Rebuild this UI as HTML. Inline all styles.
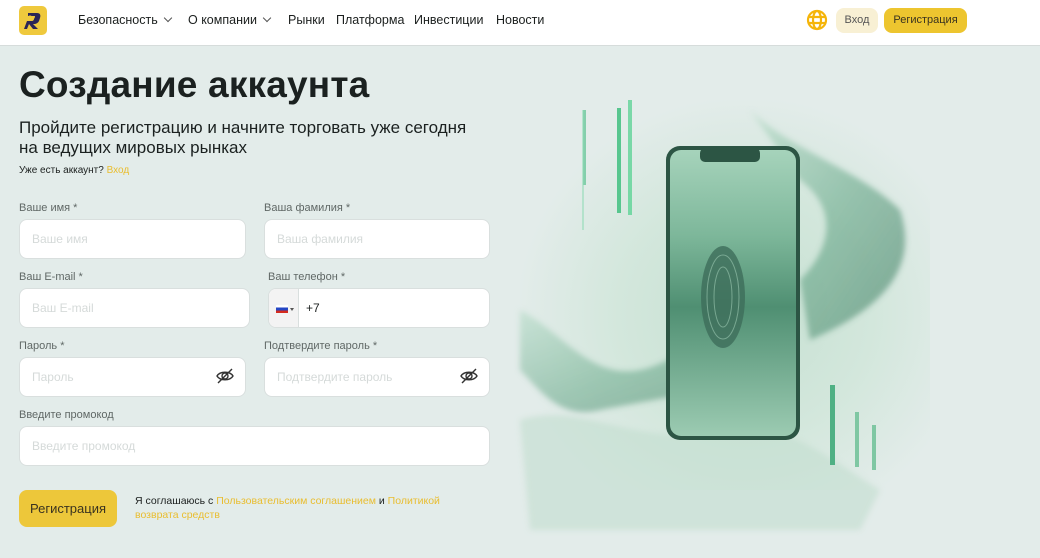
<!DOCTYPE html>
<html><head><meta charset="utf-8"><style>
*{box-sizing:border-box;margin:0;padding:0}
body{width:1040px;height:558px;overflow:hidden;background:#e3ecea;font-family:"Liberation Sans",sans-serif;position:relative;color:#1b1f1e}
.hdr{position:absolute;left:0;top:0;width:1040px;height:46px;background:#fff;border-bottom:1px solid #d6dcdb}
.logo{position:absolute;left:19px;top:6px;width:28px;height:29px;background:#efc93d;border-radius:5px}
.nav{position:absolute;top:13px;font-size:12.5px;color:#1b1f1e}
.chev{display:inline-block;width:6px;height:6px;border-right:1.2px solid #555;border-bottom:1.2px solid #555;transform:rotate(45deg);margin:0 0 3px 7px}
.abs{position:absolute}
h1{position:absolute;left:19px;top:64px;font-size:37px;font-weight:bold;color:#1b2120;letter-spacing:.2px}
.sub{position:absolute;left:19px;top:118px;font-size:17px;line-height:20px;color:#1b2120}
.lbl{position:absolute;font-size:11px;color:#606866}
.inp{position:absolute;height:40px;background:#fff;border:1px solid #d9dfde;border-radius:8px;font-size:12px;color:#d5dad9;padding:12px 12px}
.y{color:#e9bd2f}
</style></head><body>
<div class="hdr">
 <div class="logo"><svg width="28" height="29" viewBox="0 0 28 29"><path d="M9 7h9c3 0 4 2 3 5l-1 3c-1 2-3 3-5 3h-1l5 5h-5l-4-5-2 5H5l3-8h5c1 0 2-1 2-2l1-2c0-1 0-1-1-1h-6z" fill="#2b2556"/><circle cx="11" cy="12" r="2.5" fill="#efc93d"/></svg></div>
 <div class="nav" style="left:78px">Безопасность<span class="chev"></span></div>
 <div class="nav" style="left:188px">О компании<span class="chev"></span></div>
 <div class="nav" style="left:288px">Рынки</div>
 <div class="nav" style="left:336px">Платформа</div>
 <div class="nav" style="left:414px">Инвестиции</div>
 <div class="nav" style="left:496px">Новости</div>
 <svg class="abs" style="left:806px;top:9px" width="22" height="22" viewBox="0 0 22 22" fill="none" stroke="#f5b50a" stroke-width="2.2"><circle cx="11" cy="11" r="9"/><ellipse cx="11" cy="11" rx="4" ry="9"/><path d="M2 8h18M2 14h18"/></svg>
 <div class="abs" style="left:836px;top:8px;width:42px;height:25px;border-radius:8px;background:#f8f0d4;font-size:11px;color:#555;text-align:center;line-height:25px">Вход</div>
 <div class="abs" style="left:884px;top:8px;width:83px;height:25px;border-radius:8px;background:#edc52f;font-size:11px;color:#3a3320;text-align:center;line-height:25px">Регистрация</div>
</div>
<h1>Создание аккаунта</h1>
<div class="sub">Пройдите регистрацию и начните торговать уже сегодня<br>на ведущих мировых рынках</div>
<div class="abs" style="left:19px;top:165px;font-size:10px">Уже есть аккаунт? <span class="y">Вход</span></div>

<div class="lbl" style="left:19px;top:202px">Ваше имя *</div>
<div class="lbl" style="left:264px;top:202px">Ваша фамилия *</div>
<div class="inp" style="left:19px;top:219px;width:227px">Ваше имя</div>
<div class="inp" style="left:264px;top:219px;width:226px">Ваша фамилия</div>

<div class="lbl" style="left:19px;top:271px">Ваш E-mail *</div>
<div class="lbl" style="left:268px;top:271px">Ваш телефон *</div>
<div class="inp" style="left:19px;top:288px;width:231px">Ваш E-mail</div>
<div class="inp" style="left:268px;top:288px;width:222px;padding:0;overflow:hidden">
 <div class="abs" style="left:0;top:0;width:30px;height:38px;background:#f3f3f3;border-right:1px solid #d9dfde"></div>
 <div class="abs" style="left:7px;top:16px;width:12px;height:8px;background:linear-gradient(#fff 33%,#2446c4 33% 66%,#d52b1e 66%)"></div>
 <div class="abs" style="left:21px;top:19px;border:2px solid transparent;border-top:3px solid #555"></div>
 <div class="abs" style="left:37px;top:12px;color:#1b1f1e;font-size:12px">+7</div>
</div>

<div class="lbl" style="left:19px;top:340px">Пароль *</div>
<div class="lbl" style="left:264px;top:340px">Подтвердите пароль *</div>
<div class="inp" style="left:19px;top:357px;width:227px">Пароль</div>
<div class="inp" style="left:264px;top:357px;width:226px">Подтвердите пароль</div>
<svg class="abs" style="left:215px;top:366px" width="20" height="20" viewBox="0 0 20 20" fill="none" stroke="#333" stroke-width="1.4"><path d="M2 10c3-5 13-5 16 0c-3 5-13 5-16 0z"/><circle cx="10" cy="10" r="3"/><path d="M3 17L17 3"/></svg>
<svg class="abs" style="left:459px;top:366px" width="20" height="20" viewBox="0 0 20 20" fill="none" stroke="#333" stroke-width="1.4"><path d="M2 10c3-5 13-5 16 0c-3 5-13 5-16 0z"/><circle cx="10" cy="10" r="3"/><path d="M3 17L17 3"/></svg>

<div class="lbl" style="left:19px;top:409px">Введите промокод</div>
<div class="inp" style="left:19px;top:426px;width:471px">Введите промокод</div>

<div class="abs" style="left:19px;top:490px;width:98px;height:37px;border-radius:8px;background:#edc73a;font-size:13px;color:#3a3320;text-align:center;line-height:37px">Регистрация</div>
<div class="abs" style="left:135px;top:494px;font-size:10.5px;line-height:14px;width:325px">Я соглашаюсь с <span class="y">Пользовательским соглашением</span> и <span class="y">Политикой возврата средств</span></div>

<!-- illustration -->
<div class="abs" style="left:520px;top:100px;width:410px;height:390px;background:radial-gradient(ellipse at 55% 55%,#c6e0d2 0%,#d3e7dc 40%,rgba(227,236,234,0) 72%)"></div>
<svg class="abs" style="left:500px;top:50px" width="540" height="508" viewBox="0 0 540 508">
 <defs><linearGradient id="g" x1="0" y1="0" x2="1" y2="1"><stop offset="0" stop-color="#b6dcc7"/><stop offset=".5" stop-color="#6aa98b"/><stop offset="1" stop-color="#3e7a60"/></linearGradient>
 <linearGradient id="s" x1="0" y1="0" x2="0" y2="1"><stop offset="0" stop-color="#a6d3bb"/><stop offset=".3" stop-color="#7db79a"/><stop offset=".55" stop-color="#4f8f72"/><stop offset="1" stop-color="#9ccbb2"/></linearGradient>
 <filter id="b"><feGaussianBlur stdDeviation="3"/></filter></defs>
 <g filter="url(#b)">
 <path d="M250 60c40 40 110 60 150 100c20 60-20 100-90 130L300 230C330 200 340 160 300 130z" fill="url(#g)" opacity=".6"/>
 <path d="M20 260c40 20 70 70 120 60c50-10 80-60 150-60l-10 60c-60 20-130 30-180 40c-40 10-60-20-80-40z" fill="url(#g)" opacity=".55"/>
 <path d="M20 370c60-20 120 30 200 10c60-15 110 30 160 60l-20 40H30z" fill="#c2ddcf" opacity=".6"/>
 </g>
 <rect x="83" y="60" width="3" height="75" fill="#5cc392" opacity=".7"/><rect x="117" y="58" width="4" height="105" fill="#3fc07f" opacity=".85"/><rect x="128" y="50" width="4" height="115" fill="#4dd08c" opacity=".7"/><rect x="82" y="60" width="2" height="120" fill="#8ad9b1" opacity=".5"/>
 <rect x="330" y="335" width="5" height="80" fill="#4fb084"/><rect x="355" y="362" width="4" height="55" fill="#7fc7a3"/><rect x="372" y="375" width="4" height="45" fill="#7fc7a3"/>
 <rect x="166" y="96" width="134" height="294" rx="14" fill="#2c5544"/>
 <rect x="170" y="100" width="126" height="286" rx="11" fill="url(#s)"/>
 <rect x="200" y="98" width="60" height="14" rx="5" fill="#2c5544"/>
 <ellipse cx="223" cy="247" rx="22" ry="51" fill="#3d6d5a" opacity=".8"/>
 <ellipse cx="223" cy="247" rx="16" ry="42" fill="none" stroke="#9cc9b2" stroke-width="1" opacity=".6"/>
 <ellipse cx="223" cy="247" rx="9" ry="30" fill="none" stroke="#9cc9b2" stroke-width="1" opacity=".6"/>
</svg>
</body></html>
